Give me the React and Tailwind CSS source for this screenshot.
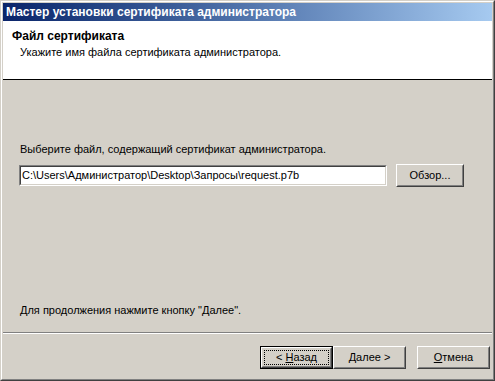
const FONT = "font-['Liberation_Sans',Arial,sans-serif]";

const Button = ({ children, isDefault, focused, className }) => (
  <div
    className={`${className} h-[23px] ${
      isDefault ? "border border-black" : ""
    }`}
  >
    <div className="h-full border border-t-white border-l-white border-r-[#404040] border-b-[#404040]">
      <div className="h-full border border-t-[#d4d0c8] border-l-[#d4d0c8] border-r-[#808080] border-b-[#808080] flex items-center justify-center p-[1px]">
        <div
          className={`h-full w-full flex items-center justify-center ${
            focused ? "border border-dotted border-black" : ""
          }`}
        >
          {children}
        </div>
      </div>
    </div>
  </div>
);

export default function App() {
  return (
    <div className={`${FONT} w-[495px] h-[381px] text-[11px] leading-[13px] text-black`}>
      <div className="h-full border border-t-[#d4d0c8] border-l-[#d4d0c8] border-r-[#404040] border-b-[#404040]">
        <div className="h-full border border-t-white border-l-white border-r-[#808080] border-b-[#808080] bg-[#d4d0c8] p-px flex flex-col">
          {/* title bar */}
          <div className="h-[18px] shrink-0 bg-gradient-to-r from-[#0a246a] to-[#a6caf0] flex items-center pl-[3px]">
            <span className="text-white font-bold text-[12px]">
              Мастер установки сертификата администратора
            </span>
          </div>

          {/* header */}
          <div className="h-[59px] shrink-0 bg-white border-b border-black pt-[9px] pl-[9px]">
            <div className="font-bold text-[12px]">Файл сертификата</div>
            <div className="mt-[3px] pl-[8px]">
              Укажите имя файла сертификата администратора.
            </div>
          </div>

          {/* body */}
          <div className="flex-1 flex flex-col">
            <div className="px-[16px]">
              <div className="mt-[63px] pl-[1px]">
                Выберите файл, содержащий сертификат администратора.
              </div>
              <div className="mt-[8px] flex items-center h-[23px]">
                <div className="w-[368px] h-[21px] border border-t-[#808080] border-l-[#808080] border-r-white border-b-white">
                  <div className="h-full border border-t-[#404040] border-l-[#404040] border-r-[#d4d0c8] border-b-[#d4d0c8] bg-white flex items-center pl-[1px] whitespace-nowrap">
                    C:\Users\Администратор\Desktop\Запросы\request.p7b
                  </div>
                </div>
                <Button className="ml-[9px] w-[68px]">Обзор...</Button>
              </div>
              <div className="mt-[117px] pl-[1px]">
                Для продолжения нажмите кнопку "Далее".
              </div>
            </div>

            <div className="mt-[15px] border-t border-t-[#808080] border-b border-b-white" />

            <div className="mt-[12px] flex justify-end pr-[2px]">
              <Button isDefault focused className="w-[73px]">
                <span>
                  &lt; <span className="underline">Н</span>азад
                </span>
              </Button>
              <Button className="w-[73px]">
                <span>
                  <span className="underline">Д</span>алее &gt;
                </span>
              </Button>
              <Button className="ml-[11px] w-[73px]">
                <span>
                  <span className="underline">О</span>тмена
                </span>
              </Button>
            </div>
          </div>
        </div>
      </div>
    </div>
  );
}
